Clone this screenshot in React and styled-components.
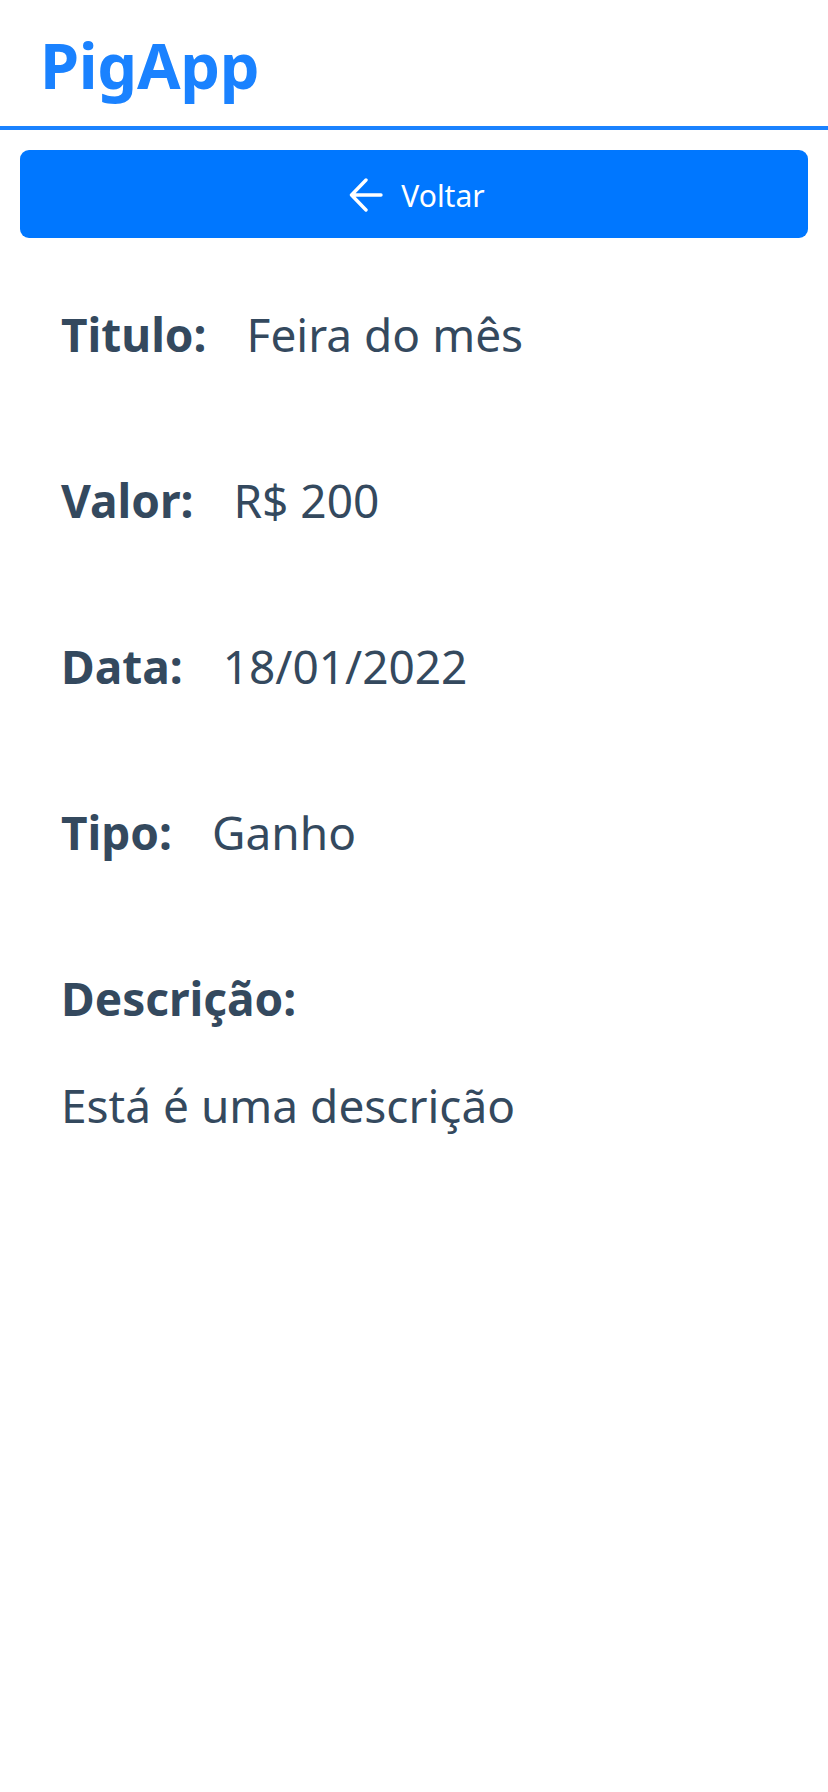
import React from "react";
import styled, { createGlobalStyle } from "styled-components";

const GlobalStyle = createGlobalStyle`
  * {
    box-sizing: border-box;
  }
  body {
    margin: 0;
    background: #fff;
    font-family: "Noto Sans", "Open Sans", sans-serif;
  }
`;

const details = [
  { label: "Titulo:", value: "Feira do mês" },
  { label: "Valor:", value: "R$ 200" },
  { label: "Data:", value: "18/01/2022" },
  { label: "Tipo:", value: "Ganho" },
];

const App = () => {
  return (
    <Page>
      <GlobalStyle />
      <Header>
        <Logo>PigApp</Logo>
      </Header>
      <BackButton>
        <ArrowIcon />
        <span>Voltar</span>
      </BackButton>
      <Content>
        {details.map((item) => (
          <Row key={item.label}>
            <Label>{item.label}</Label>
            <Value>{item.value}</Value>
          </Row>
        ))}
        <Description>
          <Label>Descrição:</Label>
          <Value>Está é uma descrição</Value>
        </Description>
      </Content>
    </Page>
  );
};

export default App;

const ArrowIcon = () => (
  <svg width="34" height="34" viewBox="0 0 34 34" fill="none">
    <path
      d="M32 17H3M17 2L2.5 17L17 32"
      stroke="#fff"
      strokeWidth="3.4"
      strokeLinecap="round"
      strokeLinejoin="round"
    />
  </svg>
);

const Page = styled.div`
  min-height: 1792px;
  background: #fff;
`;

const Header = styled.header`
  display: flex;
  align-items: center;
  height: 130px;
  padding: 2px 40px 0;
  border-bottom: 4px solid #1a82ff;
`;

const Logo = styled.h1`
  margin: 0;
  color: #1a82ff;
  font-size: 63px;
  font-weight: 700;
  line-height: 1;
  letter-spacing: -0.3px;
`;

const BackButton = styled.button`
  display: flex;
  align-items: center;
  justify-content: center;
  gap: 18px;
  width: calc(100% - 40px);
  height: 88px;
  margin: 20px 20px 0;
  padding: 2px 0 0 6px;
  border: none;
  border-radius: 9px;
  background: #0077ff;
  color: #fff;
  font-family: "Noto Sans", sans-serif;
  font-size: 30px;
  cursor: pointer;
`;

const Content = styled.main`
  display: flex;
  flex-direction: column;
  gap: 102px;
  padding: 64px 61px 0;
  color: #34495e;
`;

const Row = styled.div`
  display: flex;
  align-items: baseline;
  gap: 40px;
  line-height: 64px;
`;

const Description = styled.div`
  display: flex;
  flex-direction: column;
  gap: 43px;
  line-height: 64px;
`;

const Label = styled.span`
  font-size: 46px;
  font-weight: 700;
`;

const Value = styled.span`
  font-size: 46px;
  font-weight: 400;
`;
